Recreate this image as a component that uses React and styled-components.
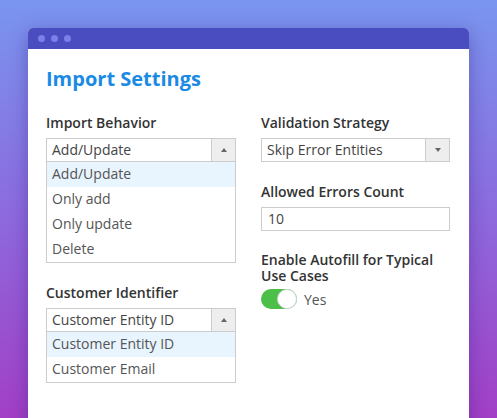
import React, { useState } from 'react'
import styled, { createGlobalStyle } from 'styled-components'

const Global = createGlobalStyle`
  html, body { margin: 0; padding: 0; }
  body { font-family: "Open Sans", "Liberation Sans", sans-serif; }
`

const Page = styled.div`
  width: 497px;
  height: 418px;
  overflow: hidden;
  background: linear-gradient(180deg, #7995ef 0%, #8a6fe0 45%, #a23fc6 100%);
  padding: 28px 28px 0;
  box-sizing: border-box;
`

const Window = styled.div`
  width: 441px;
  height: 420px;
  background: #fff;
  border-radius: 5px 5px 0 0;
  box-shadow: 0 4px 18px rgba(40, 20, 110, 0.35);
  overflow: hidden;
`

const TitleBar = styled.div`
  height: 21px;
  background: #4a4dc0;
  display: flex;
  align-items: center;
  gap: 6px;
  padding-left: 10px;
`

const Dot = styled.span`
  width: 7px;
  height: 7px;
  border-radius: 50%;
  background: #7b7fe9;
`

const Body = styled.div`
  padding: 18px 19px 0 18px;
`

const Heading = styled.h1`
  margin: 0 0 24px;
  font-size: 20px;
  line-height: 24px;
  font-weight: 700;
  color: #1b8ae4;
`

const Columns = styled.div`
  display: grid;
  grid-template-columns: 190px 189px;
  column-gap: 25px;
`

const Column = styled.div`
  display: flex;
  flex-direction: column;
`

const Field = styled.div`
  margin-bottom: ${p => p.$gap || 22}px;
`

const Label = styled.div`
  font-size: 14px;
  line-height: 16px;
  font-weight: 600;
  color: #333;
  margin-bottom: 7px;
`

const SelectBox = styled.div`
  display: flex;
  height: 24px;
  border: 1px solid #ccc;
  box-sizing: border-box;
  background: #fff;
`

const SelectValue = styled.div`
  flex: 1;
  padding-left: 5px;
  font-size: 14px;
  line-height: 22px;
  color: #444;
  white-space: nowrap;
`

const ArrowBox = styled.div`
  width: 23px;
  border-left: 1px solid #ccc;
  background: #eee;
  display: flex;
  align-items: center;
  justify-content: center;
`

const Arrow = styled.span`
  width: 0;
  height: 0;
  border-left: 3px solid transparent;
  border-right: 3px solid transparent;
  ${p => p.$up
    ? 'border-bottom: 4px solid #666;'
    : 'border-top: 4px solid #666;'}
`

const List = styled.div`
  border: 1px solid #ccc;
  border-top: none;
  background: #fff;
`

const Item = styled.div`
  height: 25px;
  line-height: 24px;
  padding-left: 5px;
  font-size: 14px;
  color: #555;
  background: ${p => (p.$active ? '#e8f4fe' : '#fff')};
`

const TextInput = styled.div`
  height: 24px;
  border: 1px solid #ccc;
  box-sizing: border-box;
  padding-left: 6px;
  font-size: 14px;
  line-height: 22px;
  color: #444;
`

const ToggleRow = styled.div`
  display: flex;
  align-items: center;
  gap: 7px;
  margin-top: -2px;
`

const Track = styled.div`
  width: 36px;
  height: 20px;
  border-radius: 10px;
  background: #4cbf48;
  position: relative;
`

const Knob = styled.span`
  position: absolute;
  top: 0;
  right: 0;
  width: 20px;
  height: 20px;
  border-radius: 50%;
  background: #fff;
  box-sizing: border-box;
  border: 1px solid #d4d4d4;
`

const ToggleText = styled.span`
  font-size: 14px;
  color: #555;
`

function Dropdown({ value, options }) {
  return (
    <>
      <SelectBox>
        <SelectValue>{value}</SelectValue>
        <ArrowBox><Arrow $up /></ArrowBox>
      </SelectBox>
      <List>
        {options.map(o => (
          <Item key={o} $active={o === value}>{o}</Item>
        ))}
      </List>
    </>
  )
}

export default function App() {
  const [autofill] = useState(true)
  return (
    <Page>
      <Global />
      <Window>
        <TitleBar>
          <Dot /><Dot /><Dot />
        </TitleBar>
        <Body>
          <Heading>Import Settings</Heading>
          <Columns>
            <Column>
              <Field>
                <Label>Import Behavior</Label>
                <Dropdown value="Add/Update" options={['Add/Update', 'Only add', 'Only update', 'Delete']} />
              </Field>
              <Field>
                <Label>Customer Identifier</Label>
                <Dropdown value="Customer Entity ID" options={['Customer Entity ID', 'Customer Email']} />
              </Field>
            </Column>
            <Column>
              <Field>
                <Label>Validation Strategy</Label>
                <SelectBox>
                  <SelectValue>Skip Error Entities</SelectValue>
                  <ArrowBox><Arrow /></ArrowBox>
                </SelectBox>
              </Field>
              <Field $gap={21}>
                <Label>Allowed Errors Count</Label>
                <TextInput>10</TextInput>
              </Field>
              <Field>
                <Label>Enable Autofill for Typical Use Cases</Label>
                <ToggleRow>
                  <Track>{autofill && <Knob />}</Track>
                  <ToggleText>Yes</ToggleText>
                </ToggleRow>
              </Field>
            </Column>
          </Columns>
        </Body>
      </Window>
    </Page>
  )
}
